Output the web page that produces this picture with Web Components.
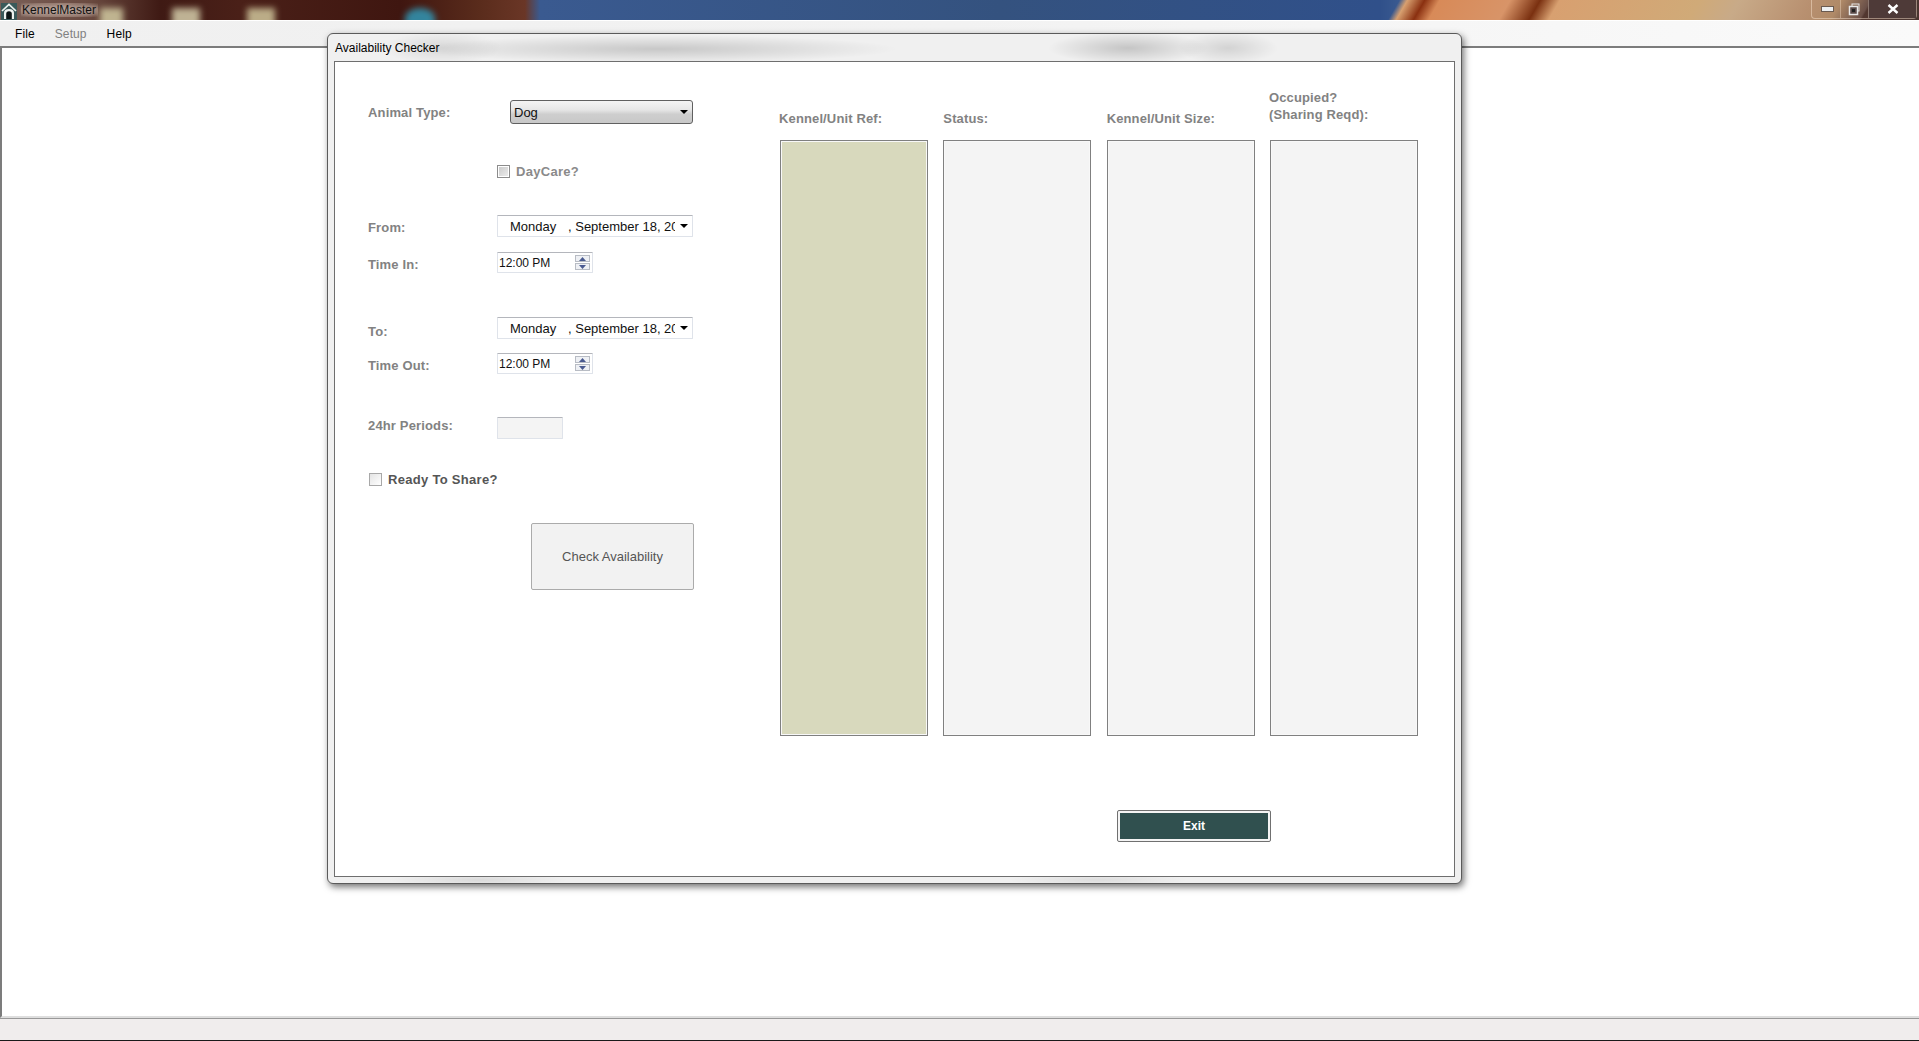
<!DOCTYPE html>
<html>
<head>
<meta charset="utf-8">
<title>KennelMaster</title>
<style>
    html, body { margin: 0; height: 100%; overflow: hidden; background: #fff; }
    body { font: 12px "Liberation Sans", Arial, sans-serif; color: #000; }
</style>
</head>
<body>
<km-shell>
    <km-dialog slot="dialog" heading="Availability Checker">
        <km-form>
            <km-field label="Animal Type:" label-top="5"><km-select value="Dog"></km-select></km-field>
            <km-field><km-check label="DayCare?" muted></km-check></km-field>
            <km-field label="From:" label-top="5"><km-date></km-date></km-field>
            <km-field label="Time In:" label-top="5"><km-time></km-time></km-field>
            <km-field label="To:" label-top="7"><km-date></km-date></km-field>
            <km-field label="Time Out:" label-top="5"><km-time></km-time></km-field>
            <km-field label="24hr Periods:" label-top="1"><km-readout></km-readout></km-field>
            <km-check label="Ready To Share?"></km-check>
            <km-button>Check Availability</km-button>
        </km-form>
        <km-results>
            <km-column heading="Kennel/Unit Ref:" selected></km-column>
            <km-column heading="Status:"></km-column>
            <km-column heading="Kennel/Unit Size:"></km-column>
            <km-column heading="Occupied?&#10;(Sharing Reqd):" raised></km-column>
            <km-exit slot="footer">Exit</km-exit>
        </km-results>
    </km-dialog>
</km-shell>

<script>
// small helper so each element only declares its html
class Base extends HTMLElement {
    constructor() {
        super();
        this.attachShadow({ mode: 'open' });
    }
    render(html) {
        this.shadowRoot.innerHTML = html;
    }
}

class KmShell extends Base {
    connectedCallback() {
        this.render(`
            <style>
                :host { display: flex; flex-direction: column; height: 1041px; position: relative; }
                #client { flex: 1; background: #fff; border-top: 2px solid #7c7c7c; border-left: 2px solid #7c7c7c; border-bottom: 2px solid #dedede; box-sizing: border-box; }
                #dialogSpot { position: absolute; left: 327px; top: 33px; }
            </style>
            <km-titlebar></km-titlebar>
            <km-menubar></km-menubar>
            <div id="client"></div>
            <km-statusbar></km-statusbar>
            <div id="dialogSpot"><slot name="dialog"></slot></div>
        `);
    }
}

class KmTitlebar extends Base {
    connectedCallback() {
        this.render(`
            <style>
                :host {
                    display: flex; align-items: center; height: 21px; box-sizing: border-box;
                    border-bottom: 1px solid #fff; position: relative; overflow: hidden;
                    background:
                        linear-gradient(120deg, transparent 1212px, #d8a070 1219px, #8a3010 1234px, #d88a58 1247px, #d89468 1308px, #7a3010 1334px, #d8a070 1351px, #d0aa78 1472px, #c8aa88 1507px, #b89070 1569px, #b08a68 1595px, #6a5048 1620px, transparent 1622px),
                        linear-gradient(90deg, #7a6058 0, #6a4a40 90px, #3f1a14 160px, #4a2018 240px, #3f1610 400px, #5a2c1c 480px, #6a3626 525px, #3a5a90 540px, #34527f 1000px, #30508a 1380px, #3a5a90 1400px, #5a3a30 1812px, #4a3530 1919px);
                }
                .blob { position: absolute; top: 8px; height: 20px; filter: blur(3px); opacity: .8; }
                #icon { width: 16px; height: 17px; margin: 2px 4px 0 1px; flex: none; position: relative; }
                #name { position: relative; color: #111; font-size: 12px; padding: 0 2px 0 1px; background: radial-gradient(ellipse at center, rgba(255,235,220,.45), rgba(255,235,220,.25) 70%, transparent); text-shadow: 0 0 4px rgba(255,255,255,.5); }
                #ctrls { position: absolute; right: 2px; top: 0; display: flex; height: 18px; border: 1px solid rgba(255,235,215,.45); border-top: 0; border-radius: 0 0 4px 4px; }
                .b { display: flex; align-items: center; justify-content: center; border-left: 1px solid rgba(255,235,215,.35); }
                .b:first-child { border-left: 0; }
                #min { width: 28px; } #max { width: 27px; } #close { width: 47px; background: #4e3a38; }
            </style>
            <i class="blob" style="left:100px;width:23px;background:#d8d2a8"></i>
            <i class="blob" style="left:172px;width:28px;background:#ded8b4"></i>
            <i class="blob" style="left:247px;width:28px;background:#d8d0a4"></i>
            <i class="blob" style="left:405px;width:30px;background:#2f9fc0;border-radius:50% 50% 0 0"></i>
            <svg id="icon" viewBox="0 0 16 17">
                <rect x="0" y="0" width="16" height="17" fill="#3a5a5a"/>
                <path d="M1 8 L8 1.5 L15 8" fill="none" stroke="#eef3f0" stroke-width="1.7"/>
                <path d="M3 16 V10 Q3 6 8 6 Q13 6 13 10 V16 Z" fill="#eef3f0"/>
                <path d="M5.2 16 V11 Q5.2 8.2 8 8.2 Q10.8 8.2 10.8 11 V16 Z" fill="#0d1616"/>
            </svg>
            <span id="name">KennelMaster</span>
            <div id="ctrls">
                <div class="b" id="min"><svg width="13" height="7" style="margin-left:3px"><rect x=".5" y=".5" width="12" height="5" fill="#eef0f2" stroke="#6a5a50"/></svg></div>
                <div class="b" id="max"><svg width="13" height="13"><rect x="4" y="1" width="7" height="7" fill="none" stroke="#e8e8e8"/><rect x="1.5" y="3.5" width="8" height="8" fill="#5a4a48" stroke="#e8e8e8" stroke-width="1.5"/><rect x="4" y="6" width="3" height="3" fill="#222"/></svg></div>
                <div class="b" id="close"><svg width="12" height="10"><path d="M1.5 1 L10.5 9 M10.5 1 L1.5 9" stroke="#fff" stroke-width="2.4"/></svg></div>
            </div>
        `);
    }
}

class KmMenubar extends Base {
    connectedCallback() {
        this.render(`
            <style>
                :host { display: flex; align-items: center; height: 25px; padding-left: 15px; box-sizing: border-box; background: linear-gradient(90deg, #f0f0f0, #f2f2f2 50%, #fafafa); font-size: 12px; color: #000; letter-spacing: .1px; }
                span { margin-right: 20px; }
                .off { color: #808080; }
            </style>
            <span>File</span><span class="off">Setup</span><span>Help</span>
        `);
    }
}

class KmStatusbar extends Base {
    connectedCallback() {
        this.render(`
            <style>
                :host { display: block; height: 23px; box-sizing: border-box; border-top: 1px solid #999; border-bottom: 1px solid #1a1a1a; background: #f0eded; }
            </style>
        `);
    }
}

class KmDialog extends Base {
    connectedCallback() {
        this.render(`
            <style>
                :host { display: flex; flex-direction: column; width: 1135px; height: 851px; box-sizing: border-box; border: 1px solid #5a5a5a; border-radius: 6px; box-shadow: 2px 3px 7px rgba(0,0,0,.55);
                    background:
                        radial-gradient(ellipse 60px 16px at 114px 14px, rgba(0,0,0,.1), transparent),
                        radial-gradient(ellipse 240px 14px at 330px 15px, rgba(0,0,0,.17), transparent),
                        radial-gradient(ellipse 80px 16px at 800px 14px, rgba(0,0,0,.18), transparent),
                        radial-gradient(ellipse 50px 16px at 900px 14px, rgba(0,0,0,.12), transparent),
                        radial-gradient(ellipse 90px 7px at 150px 846px, rgba(0,0,0,.09), transparent),
                        radial-gradient(ellipse 90px 7px at 770px 846px, rgba(0,0,0,.08), transparent),
                        #f0f0f0; }
                #head { height: 27px; display: flex; align-items: center; padding-left: 7px; box-sizing: border-box; font-size: 12px; color: #000; }
                #body { flex: 1; display: flex; margin: 0 6px 6px; background: #fff; border: 1px solid #6e6e6e; }
            </style>
            <div id="head">${this.getAttribute('heading')}</div>
            <div id="body"><slot></slot></div>
        `);
    }
}

class KmForm extends Base {
    connectedCallback() {
        this.render(`
            <style>
                :host { display: grid; width: 445px; box-sizing: border-box; padding: 38px 0 0 33px; align-content: start; align-items: start; grid-template-rows: 65px 50px 37px 65px 36px 64px 56px 50px 67px; }
            </style>
            <slot></slot>
        `);
    }
}

class KmField extends Base {
    connectedCallback() {
        const label = this.getAttribute('label') || '';
        const top = this.getAttribute('label-top') || 0;
        this.render(`
            <style>
                :host { display: flex; }
                #l { width: 129px; flex: none; box-sizing: border-box; padding-top: ${top}px; font: bold 13px/16px "Liberation Sans", Arial, sans-serif; color: #828282; letter-spacing: .15px; }
            </style>
            <div id="l">${label}</div>
            <slot></slot>
        `);
    }
}

class KmSelect extends Base {
    connectedCallback() {
        this.render(`
            <style>
                :host { display: flex; align-items: center; justify-content: space-between; box-sizing: border-box; margin-left: 13px; width: 183px; height: 24px; padding: 0 3px 0 3px; border: 1px solid #606060; border-radius: 3px; background: linear-gradient(#f4f4f4, #e6e6e6 40%, #cecece 60%, #c8c8c8); font-size: 13px; color: #111; }
            </style>
            <span>${this.getAttribute('value')}</span>
            <svg width="9" height="5"><path d="M0 0 H8 L4 4 Z" fill="#000"/></svg>
        `);
    }
}

const fieldBox = `
    box-sizing: border-box; background: #fff;
    border: 1px solid #dfe3ea; border-top-color: #b4b6bc; border-radius: 1px;
`;

class KmDate extends Base {
    connectedCallback() {
        this.render(`
            <style>
                :host { display: flex; align-items: center; width: 196px; height: 22px; ${fieldBox} font-size: 13px; color: #111; }
                #day { width: 70px; flex: none; padding-left: 12px; box-sizing: border-box; }
                #rest { width: 107px; flex: none; overflow: hidden; white-space: nowrap; }
                svg { margin-left: 5px; }
            </style>
            <span id="day">Monday</span><span id="rest">, September 18, 2017</span>
            <svg width="9" height="5"><path d="M0 0 H8 L4 4 Z" fill="#000"/></svg>
        `);
    }
}

class KmTime extends Base {
    connectedCallback() {
        this.render(`
            <style>
                :host { display: flex; align-items: center; justify-content: space-between; width: 96px; height: 21px; ${fieldBox} padding: 0 2px 0 1px; font-size: 12px; color: #111; }
                #spin { display: flex; flex-direction: column; gap: 1px; }
                .s { width: 15px; height: 7px; box-sizing: border-box; border: 1px solid #b8bcc4; background: #eef0f4; display: flex; align-items: center; justify-content: center; }
            </style>
            <span>12:00 PM</span>
            <div id="spin">
                <div class="s"><svg width="7" height="4"><path d="M3.5 0 L7 4 H0 Z" fill="#4a5a90"/></svg></div>
                <div class="s"><svg width="7" height="4"><path d="M0 0 H7 L3.5 4 Z" fill="#4a5a90"/></svg></div>
            </div>
        `);
    }
}

class KmReadout extends Base {
    connectedCallback() {
        this.render(`
            <style>
                :host { display: block; width: 66px; height: 22px; ${fieldBox} background: #f4f4f4; }
            </style>
        `);
    }
}

class KmCheck extends Base {
    connectedCallback() {
        const muted = this.hasAttribute('muted');
        this.render(`
            <style>
                :host { display: flex; align-items: center; height: 13px; gap: 6px; margin-left: ${muted ? 0 : 1}px; font: bold 13px/16px "Liberation Sans", Arial, sans-serif; letter-spacing: .3px; color: ${muted ? '#8a8a8a' : '#555'}; }
                i { display: block; width: 13px; height: 13px; box-sizing: border-box; border: 1px solid ${muted ? '#8c8c8c' : '#a8a8a8'}; background: ${muted ? 'linear-gradient(135deg, #c8c8c8, #eee)' : 'linear-gradient(135deg, #e4e4e4, #fff)'}; ${muted ? 'box-shadow: inset 0 0 0 1px #fff;' : ''} }
            </style>
            <i></i><span>${this.getAttribute('label')}</span>
        `);
    }
}

class KmButton extends Base {
    connectedCallback() {
        this.render(`
            <style>
                :host { display: flex; align-items: center; justify-content: center; justify-self: start; margin-left: 163px; width: 163px; height: 67px; box-sizing: border-box; border: 1px solid #ababab; border-radius: 2px; background: #f2f2f2; font-size: 13px; color: #555; }
            </style>
            <slot></slot>
        `);
    }
}

class KmResults extends Base {
    connectedCallback() {
        this.render(`
            <style>
                :host { display: flex; flex-direction: column; padding-top: 27px; }
                #cols { display: grid; grid-template-columns: repeat(4, 148px); column-gap: 15.33px; }
                #foot { margin: 74px 0 0 337px; }
            </style>
            <div id="cols"><slot></slot></div>
            <div id="foot"><slot name="footer"></slot></div>
        `);
    }
}

class KmColumn extends Base {
    connectedCallback() {
        const raised = this.hasAttribute('raised');
        const selected = this.hasAttribute('selected');
        this.render(`
            <style>
                :host { display: flex; flex-direction: column; }
                #h { height: 51px; box-sizing: border-box; display: flex; align-items: flex-end; padding-bottom: ${raised ? 17 : 13}px; ${raised || selected ? 'margin-left: -1px;' : ''} white-space: pre-line; font: bold 13px/17px "Liberation Sans", Arial, sans-serif; color: #828282; letter-spacing: .13px; }
                #box { height: 596px; box-sizing: border-box; border: 1px solid #808080; background: ${selected ? '#d8d9bd' : '#f4f4f4'}; box-shadow: inset 0 0 0 1px #f8f8f8; }
            </style>
            <div id="h"><span>${this.getAttribute('heading')}</span></div>
            <div id="box"></div>
        `);
    }
}

class KmExit extends Base {
    connectedCallback() {
        this.render(`
            <style>
                :host { display: block; width: 154px; height: 32px; box-sizing: border-box; border: 1px solid #707070; border-radius: 2px; padding: 2px; background: #f4f4f4; }
                div { height: 100%; display: flex; align-items: center; justify-content: center; background: #30504f; color: #fff; font: bold 12px "Liberation Sans", Arial, sans-serif; }
            </style>
            <div><slot></slot></div>
        `);
    }
}

customElements.define('km-shell', KmShell);
customElements.define('km-titlebar', KmTitlebar);
customElements.define('km-menubar', KmMenubar);
customElements.define('km-statusbar', KmStatusbar);
customElements.define('km-dialog', KmDialog);
customElements.define('km-form', KmForm);
customElements.define('km-field', KmField);
customElements.define('km-select', KmSelect);
customElements.define('km-date', KmDate);
customElements.define('km-time', KmTime);
customElements.define('km-readout', KmReadout);
customElements.define('km-check', KmCheck);
customElements.define('km-button', KmButton);
customElements.define('km-results', KmResults);
customElements.define('km-column', KmColumn);
customElements.define('km-exit', KmExit);
</script>
</body>
</html>
